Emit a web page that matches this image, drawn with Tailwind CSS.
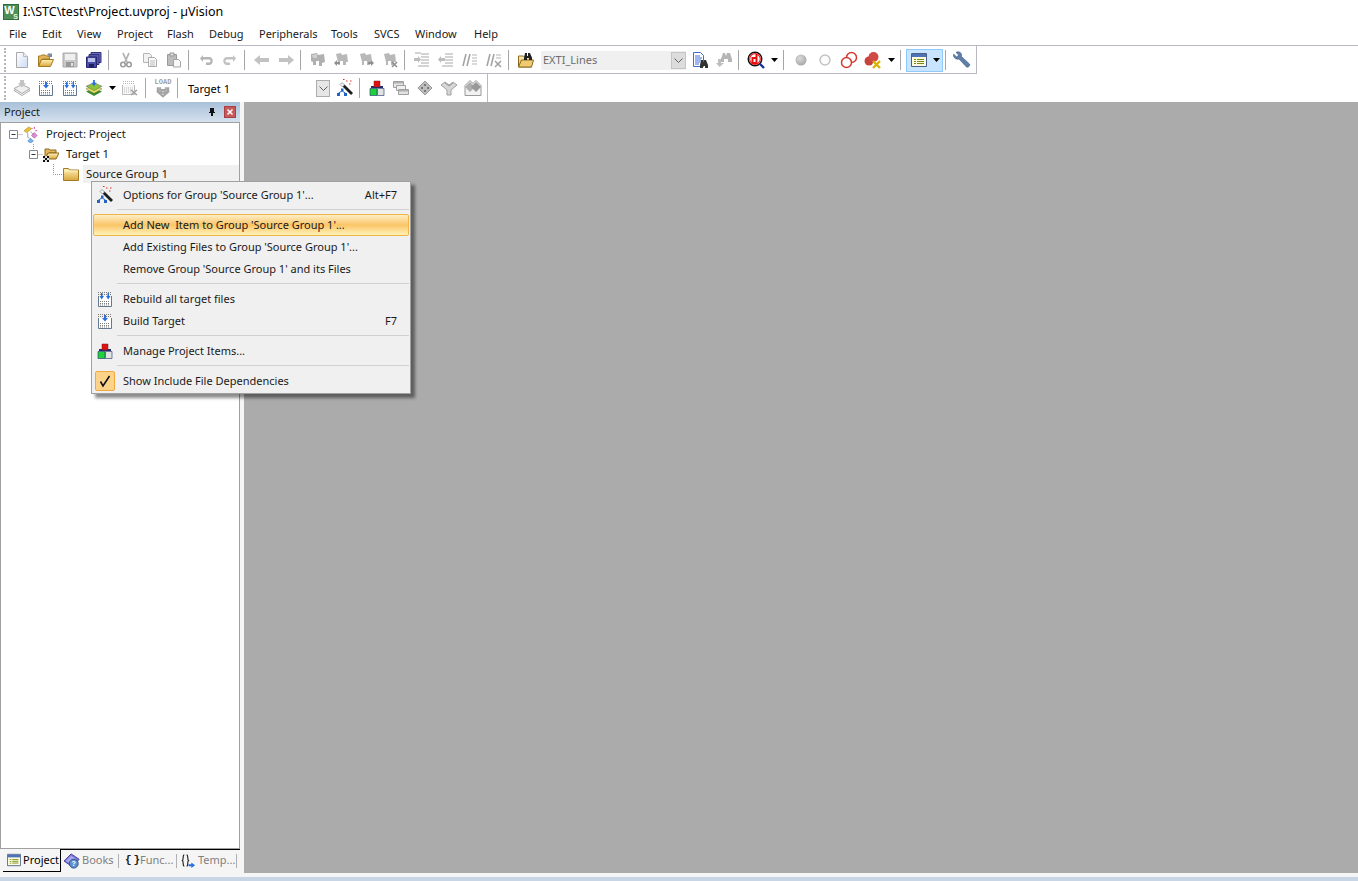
<!DOCTYPE html>
<html lang="en">

<head>
    <meta charset="UTF-8">
    <title>I:\STC\test\Project.uvproj - µVision</title>
    <script src="https://cdn.jsdelivr.net/npm/@tailwindcss/browser@4"></script>
</head>

<body class="bg-white overflow-hidden font-['Noto_Sans','Liberation_Sans',sans-serif] text-[11px] text-[#1a1a1a]">

    <!-- Icon sheet -->
    <svg class="absolute w-0 h-0" width="0" height="0">
        <defs>
            <linearGradient id="folder" x1="0" y1="0" x2="0" y2="1"><stop offset="0" stop-color="#fff3b8" /><stop offset="1" stop-color="#dba63a" /></linearGradient>
            <linearGradient id="blue" x1="0" y1="0" x2="1" y2="1"><stop offset="0" stop-color="#ffffff" /><stop offset="1" stop-color="#cfdcf5" /></linearGradient>
            <radialGradient id="gb" cx=".4" cy=".35" r=".7"><stop offset="0" stop-color="#dadada" /><stop offset="1" stop-color="#a6a6a6" /></radialGradient>
            <symbol id="i-new" viewBox="0 0 16 16"><path d="M2.500 .5h7l4 4v11h-11z" fill="url(#blue)" stroke="#a9a9a9" /><path d="M9.500 .5v4h4" fill="#eee" stroke="#bbb" /></symbol>
            <symbol id="i-open" viewBox="0 0 16 16"><path d="M.5 14V4h2l1-1h4l1 1h3v3h-7l-1 1z" fill="#e2b556" stroke="#a37a22" /><path d="M.5 14.500l3-7h12l-3 7z" fill="url(#folder)" stroke="#a37a22" /><path d="M9 3c1-2 3-2 4-1l1-1v4h-4l1-1c-.5-.7-1.300-.7-2-1z" fill="#7a8aa0" /></symbol>
            <symbol id="i-save" viewBox="0 0 16 16"><path d="M1 1h14v14H1z" fill="#c9c9c9" stroke="#aaa" /><path d="M3 2h10v6H3z" fill="#efefef" /><path d="M4 10h8v5H4z" fill="#999" /><path d="M9 11h2v3H9z" fill="#e5e5e5" /></symbol>
            <symbol id="i-saveall" viewBox="0 0 16 16"><path d="M5 .5h10v10H5z" fill="#6d70c0" stroke="#30307a" /><path d="M3 2.500h10v10H3z" fill="#5558ad" stroke="#30307a" /><path d="M.5 5h10v10.500H.5z" fill="#4a4da6" stroke="#262670" /><path d="M2 6h7v4H2z" fill="#b9c3ee" /><path d="M3 12h5v3H3z" fill="#1e1e60" /></symbol>
            <symbol id="i-cut" viewBox="0 0 16 16"><path d="M5 1l4 9M11 1L7 10" stroke="#b3b3b3" stroke-width="1.800" fill="none" /><circle cx="5" cy="12.500" r="2.300" fill="none" stroke="#999" stroke-width="1.500" /><circle cx="11" cy="12.500" r="2.300" fill="none" stroke="#999" stroke-width="1.500" /></symbol>
            <symbol id="i-copy" viewBox="0 0 16 16"><path d="M1.500 1.500h6l2 2v7h-8z" fill="#f2f2f2" stroke="#b5b5b5" /><path d="M6.500 5.500h6l2 2v7h-8z" fill="#fafafa" stroke="#aaa" /><path d="M8 9h5M8 11h5M8 13h5" stroke="#bbb" /></symbol>
            <symbol id="i-paste" viewBox="0 0 16 16"><path d="M1.500 2.500h9v11h-9z" fill="#bdbdbd" stroke="#999" /><path d="M4 1h4v3H4z" fill="#ddd" stroke="#999" /><path d="M7.500 7.500h5l2 2v5.500h-7z" fill="#f8f8f8" stroke="#a5a5a5" /></symbol>
            <symbol id="i-undo" viewBox="0 0 16 16"><path d="M3 5h6c5 0 5 8 0 8H6v-2.500h3c2 0 2-3 0-3H3v2.500L0 6.500 3 3z" transform="translate(2 0)" fill="#b5b5b5" /></symbol>
            <symbol id="i-redo" viewBox="0 0 16 16"><path d="M13 5H7c-5 0-5 8 0 8h3v-2.500H7c-2 0-2-3 0-3h6v2.500l3-3.500L13 3z" transform="translate(-2 0)" fill="#c2c2c2" /></symbol>
            <symbol id="i-left" viewBox="0 0 16 16"><path d="M0 8l6-5v3h9v4H6v3z" fill="#c2c2c2" /></symbol>
            <symbol id="i-right" viewBox="0 0 16 16"><path d="M16 8l-6-5v3H1v4h9v3z" fill="#c2c2c2" /></symbol>
            <symbol id="i-bm" viewBox="0 0 16 16"><path d="M1 2l6-1 1 2 6-1 1 8-3 1v3H9V9H6v4H3v-3L1 9z" fill="#b0b0b0" /><path d="M2 3l5-1v4H3z" fill="#cfcfcf" /></symbol>
            <symbol id="i-bmprev" viewBox="0 0 16 16"><path d="M2 2l5-1 1 2 5-1 1 8h-2v3H9V9H6v4H4v-3z" fill="#b8b8b8" /><path d="M0 11l3-3v2h3v2H3v2z" fill="#8f8f8f" /></symbol>
            <symbol id="i-bmnext" viewBox="0 0 16 16"><path d="M2 2l5-1 1 2 5-1 1 8h-2v3H9V9H6v4H4v-3z" fill="#b8b8b8" /><path d="M16 11l-3-3v2h-3v2h3v2z" fill="#8f8f8f" /></symbol>
            <symbol id="i-bmdel" viewBox="0 0 16 16"><path d="M2 2l5-1 1 2 5-1 1 8h-2v3H9V9H6v4H4v-3z" fill="#b8b8b8" /><path d="M10 10l5 5M15 10l-5 5" stroke="#8f8f8f" stroke-width="1.500" /></symbol>
            <symbol id="i-indent" viewBox="0 0 16 16"><path d="M7 2h8M7 5h8M7 8h8M7 11h8M4 14h11M1 1h6" stroke="#a8a8a8" fill="none" /><path d="M0 6h4V4l3 3.500L4 11V9H0z" fill="#bdbdbd" /></symbol>
            <symbol id="i-outdent" viewBox="0 0 16 16"><path d="M7 2h8M7 5h8M7 8h8M7 11h8M4 14h11" stroke="#a8a8a8" fill="none" /><path d="M7 6H3V4L0 7.500 3 11V9h4z" fill="#bdbdbd" /></symbol>
            <symbol id="i-comment" viewBox="0 0 16 16"><path d="M4 2L1 14M8 2L5 14" stroke="#a5a5a5" stroke-width="1.600" /><path d="M10 3h5M10 6h5M10 9h5M10 12h5" stroke="#b5b5b5" /></symbol>
            <symbol id="i-uncomment" viewBox="0 0 16 16"><path d="M4 2L1 14M8 2L5 14" stroke="#a5a5a5" stroke-width="1.600" /><path d="M10 3h5M10 6h5" stroke="#b5b5b5" /><path d="M9 9l6 6M15 9l-6 6" stroke="#a0a0a0" stroke-width="1.500" /></symbol>
            <symbol id="i-findfiles" viewBox="0 0 16 16"><path d="M.5 15V4h5l1 1h7v10z" fill="url(#folder)" stroke="#8a6a20" /><path d="M.5 15l3-7h12l-2 7z" fill="#f1cb6f" stroke="#8a6a20" /><path d="M7 1h2v3h1V1h2l2 5v2h-3V6H9v2H6V6z" fill="#222" /></symbol>
            <symbol id="i-docfind" viewBox="0 0 16 16"><path d="M1.500 .5h7l3 3v11h-10z" fill="#fff" stroke="#4170c9" /><path d="M3 4h5M3 6h7M3 8h6M3 10h5M3 12h4" stroke="#3a70e0" /><path d="M9 8h2v2h1V8h2l2 5v3h-3v-2h-2v2H8v-3z" fill="#333" /></symbol>
            <symbol id="i-binoc" viewBox="0 0 16 16"><path d="M7 1h2l1 3 1-3h3l2 6v3h-4V7H8v3H5V7z" fill="#b5b5b5" /><path d="M2 7h3v4h3l-4.500 4L0 11h2z" fill="#bfbfbf" /></symbol>
            <symbol id="i-dbg" viewBox="0 0 18 18"><circle cx="8" cy="8" r="6.800" fill="#fff" stroke="#111" stroke-width="1.400" /><circle cx="8" cy="8" r="5.300" fill="none" stroke="#f02020" stroke-width="1.200" /><path d="M9.500 3v9H5.500V7h4" fill="none" stroke="#e80f0f" stroke-width="2" /><path d="M13 13l4 4" stroke="#1a2f9a" stroke-width="2.400" /></symbol>
            <symbol id="i-dotfill" viewBox="0 0 16 16"><circle cx="8" cy="8" r="5.500" fill="url(#gb)" /></symbol>
            <symbol id="i-dotempty" viewBox="0 0 16 16"><circle cx="8" cy="8" r="5" fill="#fcfcfc" stroke="#c3c3c3" stroke-width="1.500" /></symbol>
            <symbol id="i-bpboth" viewBox="0 0 18 18"><circle cx="11.500" cy="6.500" r="5" fill="none" stroke="#d33a30" stroke-width="1.500" /><circle cx="6.500" cy="11.500" r="5" fill="#fff" stroke="#d33a30" stroke-width="1.500" /></symbol>
            <symbol id="i-bpkill" viewBox="0 0 18 18"><circle cx="5" cy="10" r="4.500" fill="#c5433d" /><circle cx="9.500" cy="6" r="5" fill="#cf4a44" /><path d="M9 10l7 7M16 10l-7 7" stroke="#d8b400" stroke-width="2.400" /></symbol>
            <symbol id="i-win" viewBox="0 0 16 16"><path d="M.5 1.500h15v13H.5z" fill="#fbfbe0" stroke="#4a5f8a" /><path d="M1 2h14v3H1z" fill="#4c72b8" /><path d="M3 7h2v1H3zM3 9h2v1H3zM3 11h2v1H3z" fill="#7a8a10" /><path d="M6 7.500h7M6 9.500h7M6 11.500h7" stroke="#7a8a10" /></symbol>
            <symbol id="i-wrench" viewBox="0 0 18 18"><path d="M3 1.500c2-1.500 5-.5 5.500 2 .2 1 .1 1.500 0 2l8 7.500c1 1.500-1.500 4-3 3l-7.500-8c-2.500.8-5-.8-5.500-3-.1-.7 0-1.200.2-1.800l3 2.800 2-2z" fill="#5d7fa8" stroke="#3e5a80" stroke-width=".6" /></symbol>
            <symbol id="i-translate" viewBox="0 0 16 16"><path d="M0 10.500l8-4 8 4-8 5z" fill="#f6f6f6" stroke="#aaa" /><path d="M0 8.500l8-4 8 4-8 5z" fill="#f0f0f0" stroke="#aaa" /><path d="M6 0h4v3h2L8 7.500 4 3h2z" fill="#c4c4c4" /></symbol>
            <symbol id="i-build" viewBox="0 0 16 16"><path d="M1.500 5v10.500h13V5" fill="#fff" stroke="#64788f" /><path d="M1 1.500h14M1 3.500h14M3 10.500h10M3 12.500h10M3 14h10" stroke="#7c7c7c" stroke-dasharray="1 1" /><path d="M7 2h2v3h2L8 8.500 5 5h2z" fill="#2a6ee0" /></symbol>
            <symbol id="i-rebuild" viewBox="0 0 16 16"><path d="M1.500 5v10.500h13V5" fill="#fff" stroke="#64788f" /><path d="M1 1.500h14M1 3.500h14M3 10.500h10M3 12.500h10M3 14h10" stroke="#7c7c7c" stroke-dasharray="1 1" /><path d="M4 2h1.500v3H7L4.700 8.500 2.500 5H4zM10.500 2H12v3h1.500l-2.300 3.500L9 5h1.500z" fill="#2a6ee0" /></symbol>
            <symbol id="i-batch" viewBox="0 0 18 18"><path d="M0 13l9-4 9 4-9 5z" fill="#3c8a2e" /><path d="M0 10l9-4 9 4-9 5z" fill="#e8e35a" stroke="#666" stroke-width=".5" /><path d="M0 7l9-4 9 4-9 5z" fill="#8cc43f" stroke="#555" stroke-width=".5" /><path d="M8 0h2v3h2L9 7 6 3h2z" fill="#2a6ee0" /></symbol>
            <symbol id="i-stop" viewBox="0 0 16 16"><path d="M.5 5v9.500h12V5" fill="#f8f8f8" stroke="#bbb" /><path d="M1 1.500h12M1 3.500h12M2 8h9M2 10h9M2 12h9" stroke="#bbb" stroke-dasharray="1 1" /><path d="M9 10l6 5M15 10l-6 5" stroke="#a0a0a0" stroke-width="1.600" /></symbol>
            <symbol id="i-load" viewBox="0 0 18 12"><path d="M2 0h5v2h4V0h5v5h1l-8 7-8-7h1z" fill="#a4a4a4" /><path d="M5 1h1M5 4h1M12 1h1M12 4h1M8 5h2M8 8h2" stroke="#e8e8e8" /></symbol>
            <symbol id="i-wizard" viewBox="0 0 18 18"><path d="M8.500 5.500l8.500 8.500-2 2-8.500-8.500z" fill="#1d1d1d" /><path d="M6 3.500l2.500 2.500-2 2-2.500-2.500z" fill="#f4f4f4" stroke="#555" stroke-width=".5" /><path d="M10 2h1.500M14 2h1.500M13 5h1.500M7 .5h1.500" stroke="#d9322c" /><path d="M5 9.500h2.500V12H5zM1 14h3v3H1zM8 14h3v3H8z" fill="#2364c5" /><path d="M6 12L2.500 14M6 12l3.500 2" stroke="#2364c5" /></symbol>
            <symbol id="i-manage" viewBox="0 0 16 16"><path d="M2 6h12v2H2z" fill="#1f2d70" /><path d="M5 1h6v6H5z" fill="#e01010" stroke="#702020" stroke-width=".5" /><path d="M1 8.500h7v7H1z" fill="#1fd13a" stroke="#1f2d70" stroke-width=".6" /><path d="M8.500 8.500h6.500v7H8.500z" fill="#e2e2e2" stroke="#1f2d70" stroke-width=".6" /></symbol>
            <symbol id="i-windows" viewBox="0 0 16 16"><path d="M.5 1.500h10v6H.5z" fill="#e6e6e6" stroke="#a0a0a0" /><path d="M1 2h9v1.500H1z" fill="#b0b0b0" /><path d="M3.500 5.500h9v5h-9z" fill="#f0f0f0" stroke="#a0a0a0" /><path d="M5.500 9.500h10v5h-10z" fill="#e2e2e2" stroke="#a0a0a0" /><path d="M6 10h9v1.500H6z" fill="#b0b0b0" /></symbol>
            <symbol id="i-diamond" viewBox="0 0 16 16"><path d="M8 1l7 7-7 7-7-7z" fill="#bcbcbc" stroke="#9a9a9a" /><path d="M7 4h2v2H7zM4 7h2v2H4zM10 7h2v2h-2zM7 10h2v2H7z" fill="#7a7a7a" /></symbol>
            <symbol id="i-funnel" viewBox="0 0 16 16"><path d="M0 5l4-3 4 3 4-3 4 3-6 5v5H6v-5z" fill="#d6d6d6" stroke="#a0a0a0" /><path d="M4 3l4 3 4-3" fill="none" stroke="#999" /></symbol>
            <symbol id="i-dual" viewBox="0 0 18 18"><path d="M1 6.500l5-5 3 3 3-3 5 5v10H1z" fill="#f2f2f2" stroke="#9a9a9a" /><path d="M6 3l5 5-5 5-5-5z" fill="#aeaeae" /><path d="M12 3l5 5-5 5-5-5z" fill="#999" /></symbol>
            <symbol id="i-target" viewBox="0 0 16 16"><path d="M2 13V3h4l1 1h6v3H6z" fill="#e2b556" stroke="#8a6a20" /><path d="M2 13l3-6h11l-3 6z" fill="url(#folder)" stroke="#8a6a20" /><path d="M0 10h2v2H0zM2 12h2v2H2zM4 10h2v2H4zM0 14h2v2H0zM4 14h2v2H4z" fill="#111" /><path d="M2 10h2v2H2zM0 12h2v2H0zM4 12h2v2H4zM2 14h2v2H2z" fill="#ddd" /></symbol>
            <symbol id="i-group" viewBox="0 0 16 16"><path d="M.5 14.500v-12h5l1 1.500h9v10.500z" fill="url(#folder)" stroke="#a37a22" /><path d="M1 5h14" stroke="#fff4c8" /></symbol>
            <symbol id="i-proj" viewBox="0 0 18 18"><path d="M1 5l5-4 3 2-5 4z" fill="#eec22f" stroke="#907010" stroke-width=".5" /><path d="M9 2l1 1M12 1v2M13 5h2" stroke="#e0359c" /><path d="M12 7l3 3-3 3-3-3z" fill="#e48bd2" stroke="#7a3b80" stroke-width=".5" /><path d="M8 13l3 3-3 2-3-2z" fill="#75b8f0" stroke="#2c5f9a" stroke-width=".5" /><path d="M5 7v5l2 1M8 6l3 3" stroke="#6a7f9a" fill="none" stroke-width=".7" /></symbol>
            <symbol id="i-books" viewBox="0 0 18 18"><path d="M0 9l8-8 9 6-7 9z" fill="#7a74d8" stroke="#3e3a90" /><path d="M2 9l6-6 6 4-5 6z" fill="#a9a4ee" /><circle cx="11" cy="12" r="5" fill="#5b8fd0" stroke="#2c4f80" /><text x="11" y="15" font-size="8" font-weight="700" text-anchor="middle" fill="#fff" font-family="Liberation Sans">?</text></symbol>
            <symbol id="i-tmpl" viewBox="0 0 16 16"><path d="M3.500 2C1.500 2 3 7 1.500 8 3 9 1.500 14 3.500 14M6 2c2 0 .5 5 2 6-1.500 1 0 6-2 6" fill="none" stroke="#222" stroke-width="1.200" /><path d="M8 12h3v-2l4 3-4 3v-2H8z" fill="#2a6ee0" /></symbol>
            <symbol id="i-check" viewBox="0 0 14 14"><path d="M2.500 7.500L5 12l6.500-10" fill="none" stroke="#111" stroke-width="1.600" /></symbol>
            <symbol id="i-uv" viewBox="0 0 16 16"><path d="M0 0h16v16H0z" fill="#2f6e3d" /><path d="M1 1h14v14H1z" fill="#4e8f57" /><text x="6.500" y="10" font-size="11" font-weight="700" text-anchor="middle" fill="#fff" font-family="Liberation Sans">W</text><text x="12.500" y="15" font-size="7" font-weight="700" text-anchor="middle" fill="#eef4d8" font-family="Liberation Sans">S</text></symbol>
            <symbol id="i-caret" viewBox="0 0 7 4"><path d="M0 0h7L3.500 4z" fill="#000" /></symbol>
            <symbol id="i-chev" viewBox="0 0 9 5"><path d="M.5 .5l4 4 4-4" fill="none" stroke="#606060" /></symbol>
        </defs>
    </svg>

    <div class="flex flex-col h-[881px]">

        <!-- Title bar -->
        <div class="h-[23px] flex items-center pt-px pl-[3px] gap-1 text-[12.5px] text-black">
            <svg class="w-4 h-4"><use href="#i-uv" /></svg>
            <span>I:\STC\test\Project.uvproj - µVision</span>
        </div>

        <!-- Menu bar -->
        <div class="h-[22px] flex items-center pl-[9px]">
            <span class="w-[33px]">File</span>
            <span class="w-[35px]">Edit</span>
            <span class="w-[40px]">View</span>
            <span class="w-[50px]">Project</span>
            <span class="w-[42px]">Flash</span>
            <span class="w-[50px]">Debug</span>
            <span class="w-[72px]">Peripherals</span>
            <span class="w-[43px]">Tools</span>
            <span class="w-[41px]">SVCS</span>
            <span class="w-[59px]">Window</span>
            <span>Help</span>
        </div>

        <!-- Toolbars -->
        <div class="border-t border-[#b9b9c6]">
            <div class="w-[977px] h-[28px] border-b border-r border-[#b9b9c6] flex items-center pl-1 pt-px">
                <i class="w-[2px] h-[24px] mr-1 border-l-2 border-dotted border-[#b5b5b5]"></i>
                <span class="w-6 flex justify-center"><svg class="w-4 h-4"><use href="#i-new" /></svg></span>
                <span class="w-6 flex justify-center"><svg class="w-4 h-4"><use href="#i-open" /></svg></span>
                <span class="w-6 flex justify-center"><svg class="w-4 h-4"><use href="#i-save" /></svg></span>
                <span class="w-6 flex justify-center"><svg class="w-4 h-4"><use href="#i-saveall" /></svg></span>
                <i class="w-px h-[20px] ml-[2px] mr-[5px] bg-[#a6a6a6]"></i>
                <span class="w-6 flex justify-center"><svg class="w-4 h-4"><use href="#i-cut" /></svg></span>
                <span class="w-6 flex justify-center"><svg class="w-4 h-4"><use href="#i-copy" /></svg></span>
                <span class="w-6 flex justify-center"><svg class="w-4 h-4"><use href="#i-paste" /></svg></span>
                <i class="w-px h-[20px] ml-[2px] mr-[5px] bg-[#a6a6a6]"></i>
                <span class="w-6 flex justify-center"><svg class="w-4 h-4"><use href="#i-undo" /></svg></span>
                <span class="w-6 flex justify-center"><svg class="w-4 h-4"><use href="#i-redo" /></svg></span>
                <i class="w-px h-[20px] ml-[2px] mr-[5px] bg-[#a6a6a6]"></i>
                <span class="w-6 flex justify-center"><svg class="w-4 h-4"><use href="#i-left" /></svg></span>
                <span class="w-6 flex justify-center"><svg class="w-4 h-4"><use href="#i-right" /></svg></span>
                <i class="w-px h-[20px] ml-[2px] mr-[5px] bg-[#a6a6a6]"></i>
                <span class="w-6 flex justify-center"><svg class="w-4 h-4"><use href="#i-bm" /></svg></span>
                <span class="w-6 flex justify-center"><svg class="w-4 h-4"><use href="#i-bmprev" /></svg></span>
                <span class="w-6 flex justify-center"><svg class="w-4 h-4"><use href="#i-bmnext" /></svg></span>
                <span class="w-6 flex justify-center"><svg class="w-4 h-4"><use href="#i-bmdel" /></svg></span>
                <i class="w-px h-[20px] ml-[2px] mr-[5px] bg-[#a6a6a6]"></i>
                <span class="w-6 flex justify-center"><svg class="w-4 h-4"><use href="#i-indent" /></svg></span>
                <span class="w-6 flex justify-center"><svg class="w-4 h-4"><use href="#i-outdent" /></svg></span>
                <span class="w-6 flex justify-center"><svg class="w-4 h-4"><use href="#i-comment" /></svg></span>
                <span class="w-6 flex justify-center"><svg class="w-4 h-4"><use href="#i-uncomment" /></svg></span>
                <i class="w-px h-[20px] ml-[2px] mr-[5px] bg-[#a6a6a6]"></i>
                <span class="w-6 flex justify-center"><svg class="w-4 h-4"><use href="#i-findfiles" /></svg></span>
                <div class="w-[145px] h-[19px] ml-[3px] mr-[2px] bg-[#f0f0f0] flex items-center justify-between pl-[2px] text-[#6d6d6d]">
                    <span>EXTI_Lines</span>
                    <span class="w-[15px] h-[17px] border border-[#c4c4c4] bg-[#dcdcdc] flex items-center justify-center"><svg class="w-[9px] h-[5px]"><use href="#i-chev" /></svg></span>
                </div>
                <span class="w-6 flex justify-center"><svg class="w-4 h-4"><use href="#i-docfind" /></svg></span>
                <span class="w-6 flex justify-center"><svg class="w-4 h-4"><use href="#i-binoc" /></svg></span>
                <i class="w-px h-[20px] ml-[2px] mr-[5px] bg-[#a6a6a6]"></i>
                <span class="w-6 flex justify-center"><svg class="w-[18px] h-[18px]"><use href="#i-dbg" /></svg></span>
                <span class="w-3 flex justify-center"><svg class="w-[7px] h-1"><use href="#i-caret" /></svg></span>
                <i class="w-px h-[20px] ml-[3px] mr-[5px] bg-[#a6a6a6]"></i>
                <span class="w-6 flex justify-center"><svg class="w-4 h-4"><use href="#i-dotfill" /></svg></span>
                <span class="w-6 flex justify-center"><svg class="w-4 h-4"><use href="#i-dotempty" /></svg></span>
                <span class="w-6 flex justify-center"><svg class="w-[18px] h-[18px]"><use href="#i-bpboth" /></svg></span>
                <span class="w-6 flex justify-center"><svg class="w-[18px] h-[18px]"><use href="#i-bpkill" /></svg></span>
                <span class="w-3 flex justify-center"><svg class="w-[7px] h-1"><use href="#i-caret" /></svg></span>
                <i class="w-px h-[20px] ml-[3px] mr-[5px] bg-[#a6a6a6]"></i>
                <div class="w-[37px] h-[23px] bg-[#c9e4ff] border border-[#8fcaff] flex items-center pl-[4px]">
                    <svg class="w-4 h-4"><use href="#i-win" /></svg>
                    <svg class="w-[7px] h-1 ml-[6px]"><use href="#i-caret" /></svg>
                </div>
                <i class="w-px h-[20px] ml-[2px] mr-1 bg-[#a6a6a6]"></i>
                <span class="w-6 flex justify-center"><svg class="w-[18px] h-[18px]"><use href="#i-wrench" /></svg></span>
            </div>
            <div class="w-[488px] h-[28px] border-r border-[#b9b9c6] flex items-center pl-1">
                <i class="w-[2px] h-[24px] mr-1 border-l-2 border-dotted border-[#b5b5b5]"></i>
                <span class="w-6 flex justify-center"><svg class="w-4 h-4"><use href="#i-translate" /></svg></span>
                <span class="w-6 flex justify-center"><svg class="w-4 h-4"><use href="#i-build" /></svg></span>
                <span class="w-6 flex justify-center"><svg class="w-4 h-4"><use href="#i-rebuild" /></svg></span>
                <span class="w-6 flex justify-center"><svg class="w-4 h-4"><use href="#i-batch" /></svg></span>
                <span class="w-3 flex justify-center"><svg class="w-[7px] h-1"><use href="#i-caret" /></svg></span>
                <span class="w-6 flex justify-center"><svg class="w-4 h-4"><use href="#i-stop" /></svg></span>
                <i class="w-px h-[20px] ml-[3px] mr-[5px] bg-[#a6a6a6]"></i>
                <span class="w-6 flex flex-col items-center leading-none">
                    <span class="text-[7px] font-['Liberation_Mono',monospace] font-bold text-[#a0a0a0] h-[7px] leading-[7px]">LOAD</span>
                    <svg class="w-[16px] h-[11px] mt-px"><use href="#i-load" /></svg>
                </span>
                <i class="w-px h-[20px] ml-[2px] mr-[5px] bg-[#a6a6a6]"></i>
                <div class="w-[148px] h-[19px] flex items-center justify-between pl-[5px] pr-[1px] text-black">
                    <span class="pt-[2px]">Target 1</span>
                    <span class="w-[14px] h-[17px] mt-px border border-[#adadad] bg-[#e6e6e6] flex items-center justify-center"><svg class="w-[9px] h-[5px]"><use href="#i-chev" /></svg></span>
                </div>
                <span class="w-6 ml-[2px] flex justify-center"><svg class="w-[18px] h-[18px]"><use href="#i-wizard" /></svg></span>
                <i class="w-px h-[20px] ml-[2px] mr-[5px] bg-[#a6a6a6]"></i>
                <span class="w-6 flex justify-center"><svg class="w-4 h-4"><use href="#i-manage" /></svg></span>
                <span class="w-6 flex justify-center"><svg class="w-4 h-4"><use href="#i-windows" /></svg></span>
                <span class="w-6 flex justify-center"><svg class="w-4 h-4"><use href="#i-diamond" /></svg></span>
                <span class="w-6 flex justify-center"><svg class="w-4 h-4"><use href="#i-funnel" /></svg></span>
                <span class="w-6 flex justify-center"><svg class="w-[18px] h-[18px]"><use href="#i-dual" /></svg></span>
            </div>
        </div>

        <!-- Workspace -->
        <div class="h-[771px] flex">
            <div class="w-[244px] flex flex-col bg-[#f5f5f5]">
                <div class="h-[20px] w-[240px] shrink-0 flex items-center justify-between pl-1 pr-[4px] bg-gradient-to-b from-[#a8c0d9] to-[#d5e1ee] text-[#1a1a1a]">
                    <span>Project</span>
                    <div class="flex items-center gap-[7px]">
                        <svg class="w-[10px] h-[10px]" viewBox="0 0 10 10"><path d="M3 1h4v4h1v1H6v3H4V6H2V5h1z" fill="#111" /></svg>
                        <span class="w-[12px] h-[12px] bg-[#c8575a] border border-[#a74043] flex items-center justify-center"><svg class="w-2 h-2" viewBox="0 0 8 8"><path d="M1.500 1.500l5 5M6.500 1.500l-5 5" stroke="#fff" stroke-width="1.500" /></svg></span>
                    </div>
                </div>
                <div class="h-[727px] w-[240px] shrink-0 bg-white border border-[#a0a0a0] pt-px text-[11.3px]">
                    <div class="h-5 flex items-center">
                        <svg class="w-[24px] h-5 shrink-0" viewBox="0 0 24 20"><path d="M16.500 10.500h6" stroke="#999" stroke-dasharray="1 1" /><path d="M8.500 6.500h8v8h-8z" fill="#fff" stroke="#7f8a9a" /><path d="M10.500 10.500h4" stroke="#333" /></svg>
                        <svg class="w-[17px] h-[17px] shrink-0 -ml-[2px]"><use href="#i-proj" /></svg>
                        <span class="ml-[6px]">Project: Project</span>
                    </div>
                    <div class="h-5 flex items-center">
                        <svg class="w-[42px] h-5 shrink-0" viewBox="0 0 42 20"><path d="M32.500 0v6M36.500 10.500h6" stroke="#999" stroke-dasharray="1 1" /><path d="M28.500 6.500h8v8h-8z" fill="#fff" stroke="#7f8a9a" /><path d="M30.500 10.500h4" stroke="#333" /></svg>
                        <svg class="w-4 h-4 shrink-0"><use href="#i-target" /></svg>
                        <span class="ml-[7px]">Target 1</span>
                    </div>
                    <div class="h-5 flex items-center">
                        <svg class="w-[62px] h-5 shrink-0" viewBox="0 0 62 20"><path d="M52.500 0v10.500H62" stroke="#999" stroke-dasharray="1 1" fill="none" /></svg>
                        <svg class="w-4 h-4 shrink-0"><use href="#i-group" /></svg>
                        <span class="ml-[4px] flex-1 h-[18px] pl-[3px] leading-[18px] bg-[#f0f0f0]">Source Group 1</span>
                    </div>
                </div>
                <!-- Tabs -->
                <div class="w-[240px] h-[24px] flex items-start pl-[3px]">
                    <div class="w-[58px] h-[23px] flex items-center gap-[2px] pl-[4px] border-r border-b border-black">
                        <svg class="w-[14px] h-[14px]"><use href="#i-win" /></svg>
                        <span class="text-black">Project</span>
                    </div>
                    <div class="flex-1 h-[22px] border-t border-black flex items-center text-[#808080]">
                        <svg class="w-4 h-4 ml-[3px]"><use href="#i-books" /></svg>
                        <span class="w-[36px] ml-[2px]">Books</span>
                        <i class="w-px h-[14px] bg-[#b0b0b0]"></i>
                        <span class="w-[20px] pl-[6px] font-bold tracking-[2px] text-[#222] font-['Liberation_Mono',monospace] whitespace-nowrap">{}</span>
                        <span class="w-[37px] pl-[1px]">Func...</span>
                        <i class="w-px h-[14px] bg-[#b0b0b0]"></i>
                        <svg class="w-[15px] h-[15px] ml-[4px]"><use href="#i-tmpl" /></svg>
                        <span class="w-[38px] ml-[2px]">Temp...</span>
                        <i class="w-px h-[14px] bg-[#b0b0b0]"></i>
                    </div>
                </div>
            </div>
            <div class="flex-1 bg-[#ababab]"></div>
        </div>

        <!-- Status strip -->
        <div class="flex-1 flex flex-col">
            <div class="h-1 bg-[#f5f5f5]"></div>
            <div class="flex-1 bg-[#c8d5e4]"></div>
        </div>
    </div>

    <!-- Context menu -->
    <div class="absolute left-[91px] top-[181px] w-[320px] h-[213px] bg-[#f0f0f0] border border-[#a0a0a0] shadow-[4px_4px_3px_rgba(0,0,0,0.45)] pt-[2px] pl-px pr-px text-[#1a1a1a]">
        <div class="h-[22px] flex items-center">
            <span class="w-6 flex justify-center"><svg class="w-[18px] h-[18px]"><use href="#i-wizard" /></svg></span>
            <span class="ml-[6px]">Options for Group 'Source Group 1'...</span>
            <span class="ml-auto mr-[12px]">Alt+F7</span>
        </div>
        <div class="h-2 ml-[24px] pt-[3px]"><div class="h-px bg-[#d0d0d0]"></div></div>
        <div class="h-[22px] flex items-center bg-gradient-to-b from-[#fdeec4] via-[#fbc566] to-[#fff3b8] border border-[#eeb44a] rounded-[2px] pl-[29px] w-[316px]">
            <span class="whitespace-pre">Add New  Item to Group 'Source Group 1'...</span>
        </div>
        <div class="h-[22px] flex items-center pl-[30px]">Add Existing Files to Group 'Source Group 1'...</div>
        <div class="h-[22px] flex items-center pl-[30px]">Remove Group 'Source Group 1' and its Files</div>
        <div class="h-2 ml-[24px] pt-[3px]"><div class="h-px bg-[#d0d0d0]"></div></div>
        <div class="h-[22px] flex items-center">
            <span class="w-6 flex justify-center"><svg class="w-4 h-4"><use href="#i-rebuild" /></svg></span>
            <span class="ml-[6px]">Rebuild all target files</span>
        </div>
        <div class="h-[22px] flex items-center">
            <span class="w-6 flex justify-center"><svg class="w-4 h-4"><use href="#i-build" /></svg></span>
            <span class="ml-[6px]">Build Target</span>
            <span class="ml-auto mr-[12px]">F7</span>
        </div>
        <div class="h-2 ml-[24px] pt-[3px]"><div class="h-px bg-[#d0d0d0]"></div></div>
        <div class="h-[22px] flex items-center">
            <span class="w-6 flex justify-center"><svg class="w-4 h-4"><use href="#i-manage" /></svg></span>
            <span class="ml-[6px]">Manage Project Items...</span>
        </div>
        <div class="h-2 ml-[24px] pt-[3px]"><div class="h-px bg-[#d0d0d0]"></div></div>
        <div class="h-[22px] flex items-center">
            <span class="w-6 flex justify-center"><span class="w-[20px] h-[20px] shrink-0 bg-[#fdd38a] border border-[#f0a840] rounded-[2px] flex items-center justify-center"><svg class="w-[14px] h-[14px]"><use href="#i-check" /></svg></span></span>
            <span class="ml-[6px]">Show Include File Dependencies</span>
        </div>
    </div>

</body>

</html>
